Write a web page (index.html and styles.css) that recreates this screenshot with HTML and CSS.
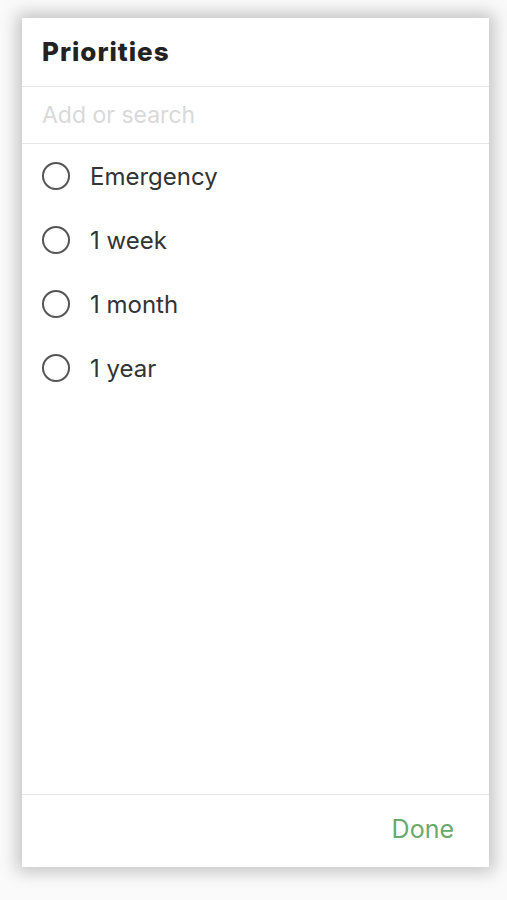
FILE: index.html
```html
<!DOCTYPE html>
<html lang="en">
<head>
  <link rel="stylesheet" href="styles.css">
</head>
<body>
  <div class="dialog">
    <h1 class="title">Priorities</h1>
    <div class="search">
      <input class="search_input" type="text" placeholder="Add or search">
    </div>
    <ul class="options">
      <li class="option"><span class="radio"></span>Emergency</li>
      <li class="option"><span class="radio"></span>1 week</li>
      <li class="option"><span class="radio"></span>1 month</li>
      <li class="option"><span class="radio"></span>1 year</li>
    </ul>
    <div class="footer">
      <button class="done">Done</button>
    </div>
  </div>
</body>
</html>
```

FILE: styles.css
```css
body{
  margin: 0;
  height: 900px;
  background-color: #fafafb;
  font-family: Inter, "Noto Sans", sans-serif;
  padding: 18px 18px 0 22px;
  box-sizing: border-box;
}
.dialog{
  width: 467px;
  height: 849px;
  background-color: #fff;
  display: flex;
  flex-direction: column;
  box-shadow: 0 0 16px 5px rgba(0, 0, 0, 0.22);
}
.title{
  margin: 0;
  height: 69px;
  box-sizing: border-box;
  padding: 0 20px 2px;
  display: flex;
  align-items: center;
  font-size: 26px;
  font-weight: 800;
  letter-spacing: 1px;
  color: #222;
  border-bottom: 1px solid #e6e6e6;
}
.search{
  height: 57px;
  box-sizing: border-box;
  border-bottom: 1px solid #e6e6e6;
  display: flex;
  align-items: center;
  padding: 0 20px;
}
.search_input{
  border: none;
  outline: none;
  padding: 0;
  width: 100%;
  font-family: inherit;
  font-size: 23px;
  color: #333;
}
.search_input::placeholder{
  color: #d9d9d9;
}
.options{
  list-style: none;
  margin: 0;
  padding: 0;
  flex: 1;
}
.option{
  height: 64px;
  display: flex;
  align-items: center;
  padding: 0 20px;
  font-size: 24px;
  color: #333;
}
.radio{
  width: 24px;
  height: 24px;
  border: 2px solid #555;
  border-radius: 50%;
  margin-right: 20px;
}
.footer{
  height: 73px;
  border-top: 1px solid #e6e6e6;
  box-sizing: border-box;
  display: flex;
  align-items: center;
  justify-content: flex-end;
  padding: 0 35px 5px;
}
.done{
  border: none;
  background: none;
  padding: 0;
  font-family: inherit;
  font-size: 25px;
  color: #6aa86b;
}
```
